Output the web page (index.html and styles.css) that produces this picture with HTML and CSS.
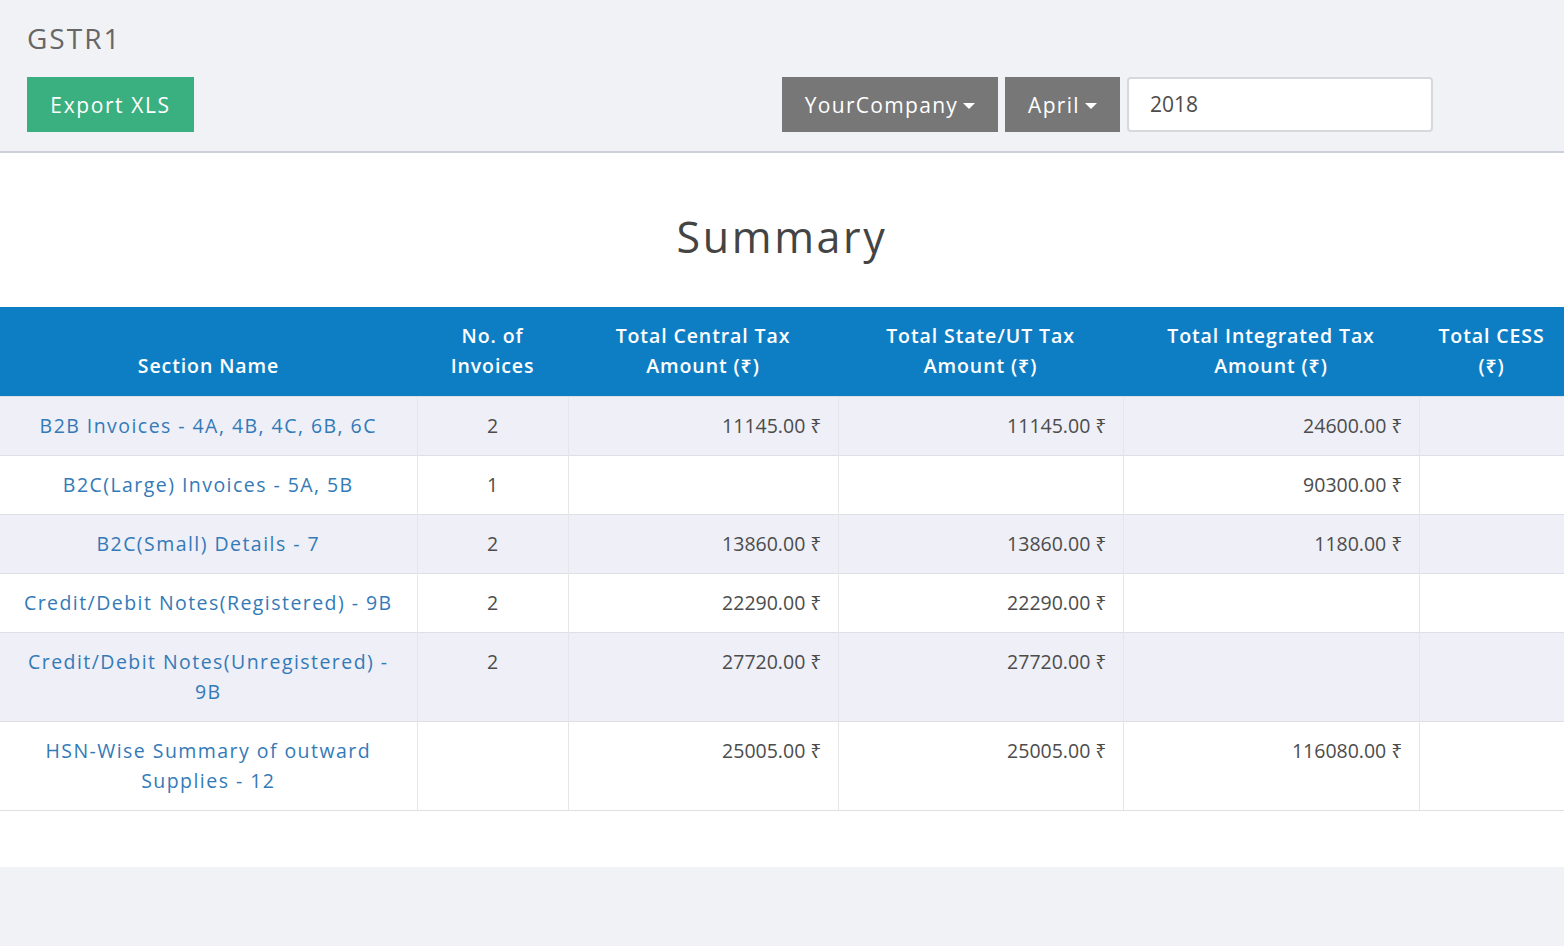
FILE: index.html
```html
<!DOCTYPE html>
<html>
<head>
<meta charset="utf-8">
<title>GSTR1</title>
<link rel="stylesheet" href="styles.css">
</head>
<body>
<div class="control-panel">
  <div class="breadcrumb">GSTR1</div>
  <div class="cp-row">
    <div class="cp-left">
      <button class="btn btn-export">Export XLS</button>
    </div>
    <div class="cp-right">
      <button class="btn btn-select">YourCompany <span class="caret"></span></button>
      <button class="btn btn-select btn-month">April <span class="caret"></span></button>
      <div class="year-input">2018</div>
    </div>
  </div>
</div>
<div class="content">
  <h1 class="title">Summary</h1>
  <table class="summary">
    <colgroup>
      <col class="c1"><col class="c2"><col class="c3"><col class="c4"><col class="c5"><col class="c6">
    </colgroup>
    <thead>
      <tr>
        <th>Section Name</th>
        <th>No. of<br>Invoices</th>
        <th>Total Central Tax<br>Amount (₹)</th>
        <th>Total State/UT Tax<br>Amount (₹)</th>
        <th>Total Integrated Tax<br>Amount (₹)</th>
        <th>Total CESS<br>(₹)</th>
      </tr>
    </thead>
    <tbody>
      <tr>
        <td class="name"><a>B2B Invoices - 4A, 4B, 4C, 6B, 6C</a></td>
        <td class="count">2</td>
        <td class="num">11145.00 ₹</td>
        <td class="num">11145.00 ₹</td>
        <td class="num">24600.00 ₹</td>
        <td class="num"></td>
      </tr>
      <tr>
        <td class="name"><a>B2C(Large) Invoices - 5A, 5B</a></td>
        <td class="count">1</td>
        <td class="num"></td>
        <td class="num"></td>
        <td class="num">90300.00 ₹</td>
        <td class="num"></td>
      </tr>
      <tr>
        <td class="name"><a>B2C(Small) Details - 7</a></td>
        <td class="count">2</td>
        <td class="num">13860.00 ₹</td>
        <td class="num">13860.00 ₹</td>
        <td class="num">1180.00 ₹</td>
        <td class="num"></td>
      </tr>
      <tr>
        <td class="name"><a>Credit/Debit Notes(Registered) - 9B</a></td>
        <td class="count">2</td>
        <td class="num">22290.00 ₹</td>
        <td class="num">22290.00 ₹</td>
        <td class="num"></td>
        <td class="num"></td>
      </tr>
      <tr>
        <td class="name"><a>Credit/Debit Notes(Unregistered) -<br>9B</a></td>
        <td class="count">2</td>
        <td class="num">27720.00 ₹</td>
        <td class="num">27720.00 ₹</td>
        <td class="num"></td>
        <td class="num"></td>
      </tr>
      <tr>
        <td class="name"><a>HSN-Wise Summary of outward<br>Supplies - 12</a></td>
        <td class="count"></td>
        <td class="num">25005.00 ₹</td>
        <td class="num">25005.00 ₹</td>
        <td class="num">116080.00 ₹</td>
        <td class="num"></td>
      </tr>
    </tbody>
  </table>
</div>
</body>
</html>
```

FILE: styles.css
```css
html, body {
  margin: 0;
  padding: 0;
}
body {
  background: #f1f2f6;
  font-family: "Open Sans", "Noto Sans", "DejaVu Sans", sans-serif;
  color: #4c4c4c;
  width: 1564px;
  overflow: hidden;
}
.control-panel {
  background: #f1f2f6;
  border-bottom: 2px solid #cbd0da;
  padding: 18px 0 19px 27px;
}
.breadcrumb {
  font-size: 28px;
  line-height: 40px;
  color: #666;
  height: 40px;
  margin-bottom: 19px;
  letter-spacing: 2px;
}
.cp-row {
  display: flex;
  height: 55px;
}
.cp-left {
  width: 755px;
}
.cp-right {
  display: flex;
  gap: 7px;
}
.btn {
  border: none;
  border-radius: 0;
  font-family: inherit;
  font-size: 21px;
  letter-spacing: 1.3px;
  color: #fff;
  height: 55px;
  padding: 0 22px;
  cursor: pointer;
}
.btn-export {
  background: #3aaf80;
  width: 167px;
  padding: 0;
  letter-spacing: 1.6px;
}
.btn-select {
  background: #777777;
  width: 216px;
  padding: 0;
  display: flex;
  align-items: center;
  justify-content: center;
  gap: 5px;
}
.btn-month {
  width: 115px;
}
.caret {
  display: inline-block;
  width: 0;
  height: 0;
  border-left: 6px solid transparent;
  border-right: 6px solid transparent;
  border-top: 6px solid #fff;
  margin-top: 3px;
}
.year-input {
  box-sizing: border-box;
  width: 306px;
  height: 55px;
  background: #fff;
  border: 2px solid #d6d8dc;
  border-radius: 4px;
  font-size: 21px;
  line-height: 51px;
  padding-left: 21px;
  color: #4c4c4c;
}
.content {
  background: #fff;
  padding-bottom: 56px;
}
.title {
  margin: 0;
  text-align: center;
  font-size: 43px;
  font-weight: 500;
  color: #444;
  line-height: 60px;
  letter-spacing: 2.6px;
  padding: 54px 0 40px;
}
.summary {
  width: 1564px;
  table-layout: fixed;
  border-collapse: collapse;
  font-size: 19.5px;
}
col.c1 { width: 417px; }
col.c2 { width: 151px; }
col.c3 { width: 270px; }
col.c4 { width: 285px; }
col.c5 { width: 296px; }
col.c6 { width: 145px; }
.summary th {
  background: #0e7ec4;
  color: #fff;
  font-weight: 600;
  line-height: 30px;
  letter-spacing: 0.9px;
  padding: 14px 2px 15px;
  text-align: center;
  vertical-align: bottom;
}
.summary td {
  line-height: 30px;
  padding: 14px 15px 14px;
  vertical-align: top;
  border-top: 1px solid #dedfe3;
  border-left: 1px solid #e6e6e8;
}
.summary td:first-child {
  border-left: none;
}
.summary tbody tr:nth-child(odd) td {
  background: #eeeff7;
}
.summary tbody tr:last-child td {
  border-bottom: 1px solid #dedfe3;
}
.summary td.name {
  text-align: center;
  padding-left: 4px;
  padding-right: 4px;
}
.summary td.name a {
  color: #337ab7;
  letter-spacing: 1.45px;
}
.summary td.count {
  text-align: center;
}
.summary td.num {
  text-align: right;
  padding-right: 16px;
}
```
